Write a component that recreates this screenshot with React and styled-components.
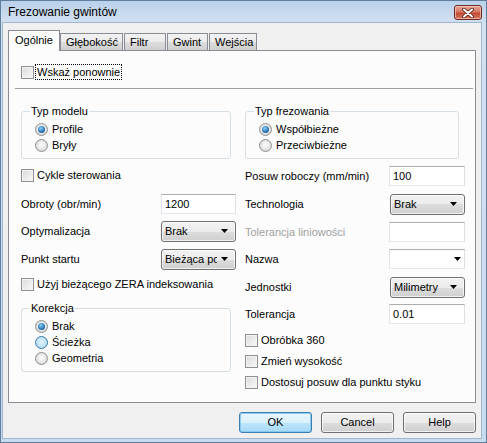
import React from 'react';
import styled, { createGlobalStyle } from 'styled-components';

const Global = createGlobalStyle`
  html, body { margin: 0; padding: 0; background: #fff; }
  body { font-family: "Liberation Sans", Arial, sans-serif; font-size: 11px; color: #000; }
  * { box-sizing: border-box; }
`;

const Window = styled.div`
  width: 487px;
  height: 443px;
  display: flex;
  flex-direction: column;
  border: 1px solid #5f7f9f;
  background: linear-gradient(#b9d1ea, #d3e1f1 22px, #c9dbee);
  padding: 0 4px 3px 1px;
`;

const TitleBar = styled.div`
  height: 21px;
  display: flex;
  justify-content: space-between;
  align-items: flex-start;
  padding-left: 6px;
`;

const Title = styled.span`
  font-size: 12px;
  line-height: 13px;
  margin-top: 5px;
  color: #000;
`;

const CloseButton = styled.div`
  width: 28px;
  height: 15px;
  margin-top: 4px;
  border: 1px solid #6b2b22;
  border-radius: 3px;
  background: linear-gradient(#e8a596, #d77864 45%, #c54a35 55%, #d7765e);
  box-shadow: inset 0 0 0 1px rgba(255, 220, 210, 0.6);
  display: flex;
  align-items: center;
  justify-content: center;
`;

const Content = styled.div`
  flex: 1;
  background: #f0f0f0;
  border: 1px solid #9fb6cf;
  padding: 7px 5px 0 5px;
  display: flex;
  flex-direction: column;
`;

const TabStrip = styled.div`
  display: flex;
  align-items: flex-end;
  height: 21px;
  margin-bottom: -1px;
  position: relative;
  z-index: 1;
`;

const Tab = styled.div`
  width: ${p => p.$w}px;
  height: ${p => (p.$active ? 21 : 18)}px;
  border: 1px solid #898c95;
  border-bottom: ${p => (p.$active ? 'none' : '1px solid #898c95')};
  margin-right: ${p => (p.$active ? 0 : 1)}px;
  background: ${p =>
    p.$active ? '#fcfcfc' : 'linear-gradient(#f2f2f2, #ebebeb 50%, #dddddd 50%, #cfcfcf)'};
  padding: ${p => (p.$active ? '3px 0 0 6px' : '2px 0 0 5px')};
  font-size: 11px;
  line-height: 13px;
  white-space: nowrap;
`;

const Panel = styled.div`
  height: 353px;
  border: 1px solid #898c95;
  background: #fcfcfc;
  display: flex;
  flex-direction: column;
  padding: 0 10px 0 12px;
`;

const TopRow = styled.div`
  margin-top: 13px;
  height: 16px;
  display: flex;
  align-items: center;
  gap: 2px;
`;

const FocusLabel = styled.span`
  outline: 1px dotted #000;
  outline-offset: 0;
  line-height: 14px;
  padding: 0 1px;
`;

const Separator = styled.div`
  margin: 8px -8px 0 -6px;
  height: 2px;
  border-top: 1px solid #a0a0a0;
  border-bottom: 1px solid #ffffff;
`;

const Columns = styled.div`
  margin-top: 21px;
  display: grid;
  grid-template-columns: 215px 220px;
  column-gap: 9px;
`;

const Column = styled.div`
  display: flex;
  flex-direction: column;
`;

const GroupBox = styled.div`
  width: ${p => p.$w}px;
  margin-top: ${p => p.$mt || 0}px;
  border: 1px solid #d5dfe5;
  border-radius: 3px;
  padding: 0 0 5px 13px;
  display: flex;
  flex-direction: column;
`;

const GroupTitle = styled.span`
  align-self: flex-start;
  margin: -7px 0 3px -5px;
  padding: 0 1px;
  line-height: 13px;
  background: #fcfcfc;
`;

const OptionRow = styled.label`
  height: ${p => p.$h || 16}px;
  margin-top: ${p => p.$mt || 0}px;
  display: flex;
  align-items: center;
  gap: ${p => p.$gap || 4}px;
  color: ${p => (p.$disabled ? '#a0a0a0' : '#000')};
  white-space: nowrap;
`;

const Radio = styled.span`
  width: 13px;
  height: 13px;
  flex: none;
  border-radius: 50%;
  border: 1px solid ${p => (p.$hover ? '#3d7bad' : '#8e8f8f')};
  background: ${p =>
    p.$hover
      ? 'radial-gradient(circle at 50% 45%, #e6f4fc 0%, #bfe3f7 55%, #9ccbe9 100%)'
      : 'radial-gradient(circle at 50% 45%, #ffffff 0%, #e4e4e4 55%, #c8c8c8 100%)'};
  display: flex;
  align-items: center;
  justify-content: center;
  &::after {
    content: '';
    display: ${p => (p.$checked ? 'block' : 'none')};
    width: 7px;
    height: 7px;
    border-radius: 50%;
    background: radial-gradient(circle at 40% 35%, #8fd0f5 0%, #3a8ac4 45%, #17457a 100%);
  }
`;

const Check = styled.span`
  width: 13px;
  height: 13px;
  flex: none;
  border: 1px solid #8f8f8f;
  background: linear-gradient(135deg, #d9d9d9, #f0f0f0 70%, #f8f8f8);
  box-shadow: inset 0 0 0 1px #f4f4f4;
`;

const FieldRow = styled.div`
  height: 20px;
  margin-top: ${p => p.$mt || 0}px;
  display: flex;
  align-items: center;
  justify-content: space-between;
`;

const Label = styled.span`
  color: ${p => (p.$disabled ? '#a0a0a0' : '#000')};
  white-space: nowrap;
`;

const TextBox = styled.div`
  width: ${p => p.$w || 75}px;
  height: 20px;
  background: #fff;
  border: 1px solid;
  border-color: #abadb3 #dbdfe6 #e3e9ef #e2e3ea;
  padding: 0 3px;
  display: flex;
  align-items: center;
  justify-content: space-between;
  line-height: 13px;
`;

const DropButton = styled.div`
  width: ${p => p.$w || 75}px;
  height: 21px;
  border: 1px solid #707070;
  border-radius: 3px;
  background: linear-gradient(#f2f2f2, #ebebeb 50%, #dddddd 50%, #cfcfcf);
  box-shadow: inset 0 0 0 1px rgba(255, 255, 255, 0.7);
  padding: 0 7px 0 3px;
  display: flex;
  align-items: center;
  justify-content: space-between;
  line-height: 13px;
  overflow: hidden;
`;

const DropText = styled.span`
  white-space: nowrap;
  overflow: hidden;
  max-width: 52px;
`;

const ButtonRow = styled.div`
  margin-top: 9px;
  display: flex;
  justify-content: flex-end;
  gap: 9px;
`;

const Button = styled.div`
  width: 73px;
  height: 21px;
  border: 1px solid ${p => (p.$default ? '#3c7fb1' : '#707070')};
  border-radius: 3px;
  background: ${p =>
    p.$default
      ? 'linear-gradient(#eaf6fd, #d9f0fc 50%, #bee6fd 50%, #a7d9f5)'
      : 'linear-gradient(#f2f2f2, #ebebeb 50%, #dddddd 50%, #cfcfcf)'};
  box-shadow: inset 0 0 0 1px ${p => (p.$default ? 'rgba(130,200,240,0.9)' : 'rgba(255,255,255,0.7)')};
  display: flex;
  align-items: center;
  justify-content: center;
  line-height: 13px;
`;

const Arrow = () => (
  <svg width="7" height="4" viewBox="0 0 7 4">
    <path d="M0 0 H7 L3.5 4 Z" fill="#000" />
  </svg>
);

const CloseGlyph = () => (
  <svg width="12" height="10" viewBox="0 0 12 10">
    <path d="M2 1.5 L10 8.5 M10 1.5 L2 8.5" stroke="#4a1a14" strokeWidth="3.6" strokeLinecap="round" />
    <path d="M2 1.5 L10 8.5 M10 1.5 L2 8.5" stroke="#ffffff" strokeWidth="2" strokeLinecap="round" />
  </svg>
);

const CheckOption = ({ children, mt, h = 18 }) => (
  <OptionRow $mt={mt} $h={h} $gap={3}>
    <Check />
    <span>{children}</span>
  </OptionRow>
);

const RadioOption = ({ children, checked, hover }) => (
  <OptionRow>
    <Radio $checked={checked} $hover={hover} />
    <span>{children}</span>
  </OptionRow>
);

const Field = ({ label, mt, disabled, children }) => (
  <FieldRow $mt={mt}>
    <Label $disabled={disabled}>{label}</Label>
    {children}
  </FieldRow>
);

const Select = ({ value }) => (
  <DropButton>
    <DropText>{value}</DropText>
    <Arrow />
  </DropButton>
);

const tabs = [
  { name: 'Ogólnie', w: 52, active: true },
  { name: 'Głębokość', w: 63 },
  { name: 'Filtr', w: 42 },
  { name: 'Gwint', w: 41 },
  { name: 'Wejścia', w: 48 },
];

export default function App() {
  return (
    <>
      <Global />
      <Window>
        <TitleBar>
          <Title>Frezowanie gwintów</Title>
          <CloseButton>
            <CloseGlyph />
          </CloseButton>
        </TitleBar>
        <Content>
          <TabStrip>
            {tabs.map(t => (
              <Tab key={t.name} $w={t.w} $active={t.active}>
                {t.name}
              </Tab>
            ))}
          </TabStrip>
          <Panel>
            <TopRow>
              <Check />
              <FocusLabel>Wskaż ponownie</FocusLabel>
            </TopRow>
            <Separator />
            <Columns>
              <Column>
                <GroupBox $w={210}>
                  <GroupTitle>Typ modelu</GroupTitle>
                  <RadioOption checked>Profile</RadioOption>
                  <RadioOption>Bryły</RadioOption>
                </GroupBox>
                <CheckOption mt={7}>Cykle sterowania</CheckOption>
                <Field label="Obroty (obr/min)" mt={10}>
                  <TextBox>1200</TextBox>
                </Field>
                <Field label="Optymalizacja" mt={7}>
                  <Select value="Brak" />
                </Field>
                <Field label="Punkt startu" mt={8}>
                  <Select value="Bieżąca pozycja" />
                </Field>
                <CheckOption mt={6}>Użyj bieżącego ZERA indeksowania</CheckOption>
                <GroupBox $w={210} $mt={15}>
                  <GroupTitle>Korekcja</GroupTitle>
                  <RadioOption checked>Brak</RadioOption>
                  <RadioOption hover>Ścieżka</RadioOption>
                  <RadioOption>Geometria</RadioOption>
                </GroupBox>
              </Column>
              <Column>
                <GroupBox $w={214}>
                  <GroupTitle>Typ frezowania</GroupTitle>
                  <RadioOption checked>Współbieżne</RadioOption>
                  <RadioOption>Przeciwbieżne</RadioOption>
                </GroupBox>
                <Field label="Posuw roboczy (mm/min)" mt={7}>
                  <TextBox $w={76}>100</TextBox>
                </Field>
                <Field label="Technologia" mt={8}>
                  <Select value="Brak" />
                </Field>
                <Field label="Tolerancja liniowości" mt={8} disabled>
                  <TextBox $w={76} />
                </Field>
                <Field label="Nazwa" mt={7}>
                  <TextBox $w={76}>
                    <span />
                    <Arrow />
                  </TextBox>
                </Field>
                <Field label="Jednostki" mt={8}>
                  <Select value="Milimetry" />
                </Field>
                <Field label="Tolerancja" mt={7}>
                  <TextBox $w={76}>0.01</TextBox>
                </Field>
                <CheckOption mt={7}>Obróbka 360</CheckOption>
                <CheckOption mt={3}>Zmień wysokość</CheckOption>
                <CheckOption mt={3}>Dostosuj posuw dla punktu styku</CheckOption>
              </Column>
            </Columns>
          </Panel>
          <ButtonRow>
            <Button $default>OK</Button>
            <Button>Cancel</Button>
            <Button>Help</Button>
          </ButtonRow>
        </Content>
      </Window>
    </>
  );
}
